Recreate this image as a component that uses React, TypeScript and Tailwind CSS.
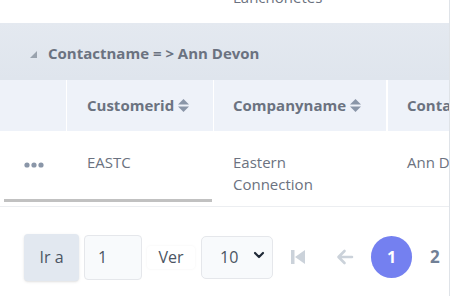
const font = "font-['Open_Sans','Noto_Sans',sans-serif]";

function SortIcon() {
  return (
    <svg width="13" height="15" viewBox="0 0 13 15" className="ml-[3px]">
      <path d="M6.5 1 L12 6.6 H1 Z" fill="#8a96a8" />
      <path d="M6.5 14 L12 8.4 H1 Z" fill="#8a96a8" />
    </svg>
  );
}

export default function App() {
  return (
    <div className={`${font} w-[451px] h-[296px] bg-white overflow-hidden`}>
      <div className="w-[450px] h-full border-r border-[#dfe3e8] flex flex-col">
        {/* previous row tail */}
        <div className="h-[23px] overflow-hidden flex">
          <div className="w-[214px]" />
          <div className="pl-[19px] -mt-[14px] text-[15px] leading-[22px] text-[#6b7280]">Lanchonetes</div>
        </div>

        {/* group header */}
        <div className="h-[57px] bg-gradient-to-b from-[#e4e9f0] to-[#dfe5ed] flex items-center pl-[30px] pt-[4px]">
          <svg width="8" height="8" viewBox="0 0 8 8" className="mr-[10px] mt-[2px]">
            <path d="M7 0 V7 H0 Z" fill="#9aa3ae" />
          </svg>
          <span className="text-[15px] font-bold text-[#6b7280]">Contactname = &gt; Ann Devon</span>
        </div>

        {/* column header */}
        <div className="h-[51px] bg-[#eef2f9] flex text-[15px] font-bold text-[#6b7280]">
          <div className="w-[67px] border-r border-white" />
          <div className="w-[147px] border-r border-white flex items-center pl-[20px]">
            Customerid<SortIcon />
          </div>
          <div className="w-[174px] border-r-2 border-white flex items-center pl-[19px]">
            Companyname<SortIcon />
          </div>
          <div className="flex-1 flex items-center pl-[19px] overflow-hidden whitespace-nowrap">Contactname</div>
        </div>

        {/* data row */}
        <div className="relative h-[76px] border-b border-[#eceef1] flex text-[15px] leading-[22px] text-[#6b7280]">
          <div className="w-[67px] flex justify-center pt-[31px]">
            <svg width="20" height="6" viewBox="0 0 20 6">
              <circle cx="3" cy="3" r="2.6" fill="#8a96a8" />
              <circle cx="10" cy="3" r="2.6" fill="#8a96a8" />
              <circle cx="17" cy="3" r="2.6" fill="#8a96a8" />
            </svg>
          </div>
          <div className="w-[147px] pl-[20px] pt-[20px]">EASTC</div>
          <div className="w-[174px] pl-[19px] pt-[20px]">Eastern<br />Connection</div>
          <div className="flex-1 pl-[19px] pt-[20px] overflow-hidden whitespace-nowrap">Ann Devon</div>
          <div className="absolute left-[4px] bottom-[4px] w-[208px] h-[3px] bg-[#c1c1c1]" />
        </div>

        {/* pager */}
        <div className="flex-1 flex items-center pl-[24px] pt-[11px] text-[16px] text-[#4b5563]">
          <div className="w-[55px] h-[47px] rounded-[4px] bg-[#e2e8f0] flex items-center justify-center shadow-sm">Ir a</div>
          <div className="ml-[5px] w-[58px] h-[45px] rounded-[4px] bg-[#f8fafc] border border-[#e5e7eb] flex items-center pl-[13px]">1</div>
          <div className="ml-[5px] w-[48px] h-[23px] rounded-[4px] bg-white shadow-[0_0_3px_rgba(0,0,0,0.05)] flex items-center justify-center">Ver</div>
          <div className="ml-[6px] w-[72px] h-[43px] rounded-[5px] bg-[#f8fafc] border border-[#e5e7eb] flex items-center pl-[18px]">
            <span>10</span>
            <svg width="12" height="8" viewBox="0 0 12 8" className="ml-[15px] -mt-[4px]">
              <path d="M2 2 L6 6 L10 2" stroke="#1f2937" strokeWidth="2.2" fill="none" strokeLinecap="round" strokeLinejoin="round" />
            </svg>
          </div>
          <svg width="14" height="14" viewBox="0 0 14 14" className="ml-[18px]">
            <rect x="0" y="0" width="3.5" height="14" fill="#cbd2da" />
            <path d="M14 0 V14 L4 7 Z" fill="#cbd2da" />
          </svg>
          <svg width="18" height="16" viewBox="0 0 18 16" className="ml-[31px]">
            <path d="M16 8 H3 M8.5 2 L2.5 8 L8.5 14" stroke="#cbd2da" strokeWidth="2.6" fill="none" strokeLinecap="round" strokeLinejoin="round" />
          </svg>
          <div className="ml-[17px] w-[41px] h-[42px] rounded-full bg-[#7480f0] text-white font-bold text-[16px] flex items-center justify-center">1</div>
          <div className="ml-[18px] text-[17px] font-bold text-[#718096]">2</div>
        </div>
      </div>
    </div>
  );
}
